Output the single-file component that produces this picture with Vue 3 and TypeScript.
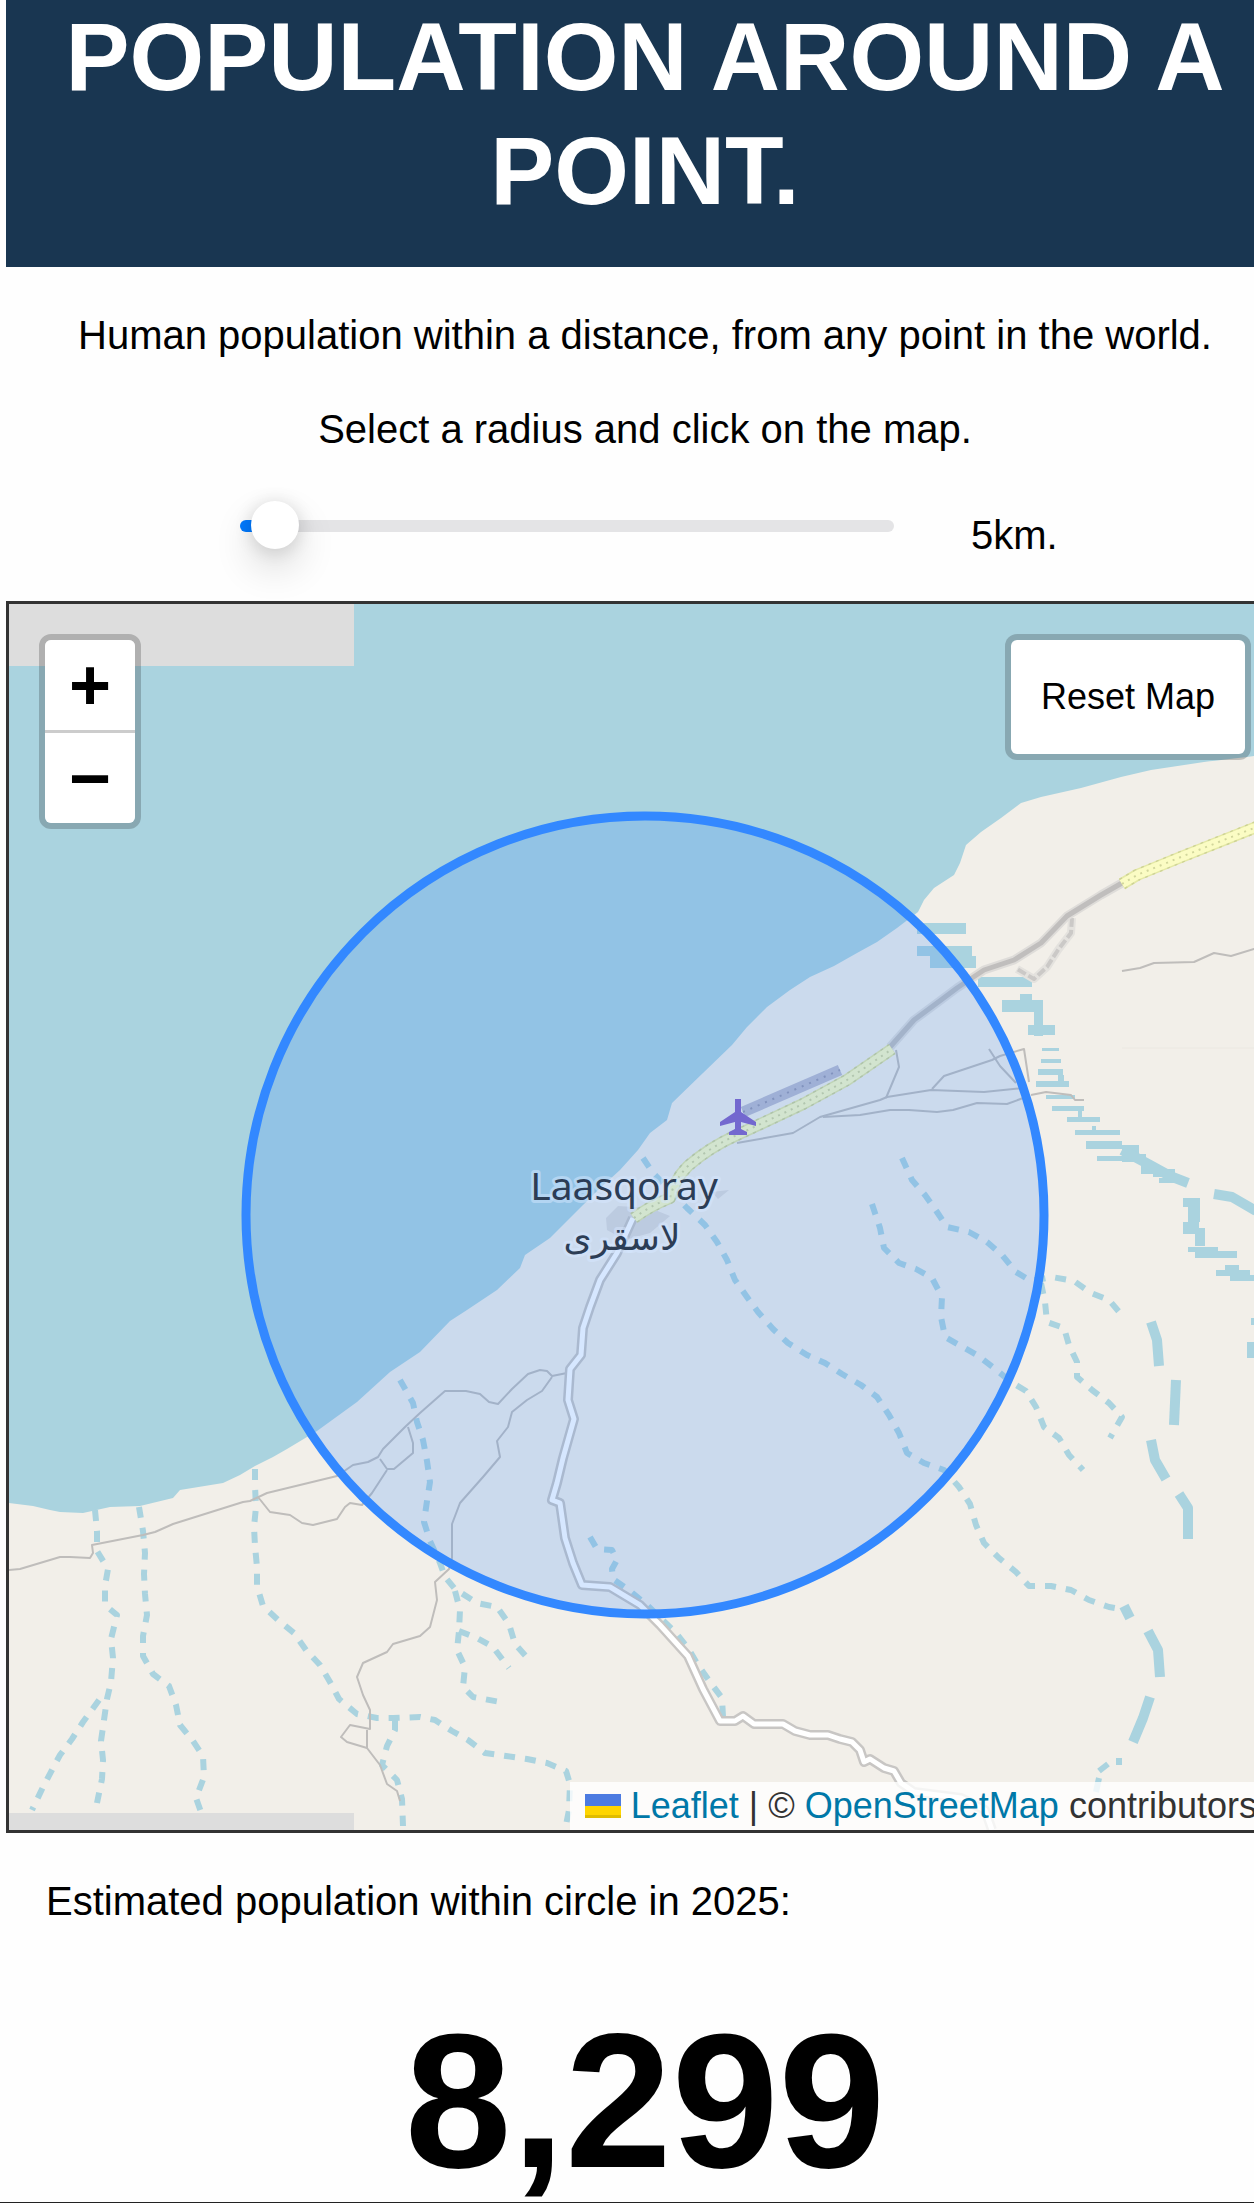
<script setup lang="ts">
import { computed, ref } from 'vue'

const MIN_RADIUS = 1
const MAX_RADIUS = 220

const radius = ref(5)
const population = ref(8299)

const fill = computed(() => `${((radius.value - MIN_RADIUS) / (MAX_RADIUS - MIN_RADIUS)) * 100}%`)
const populationText = computed(() => population.value.toLocaleString('en-US'))

function resetMap() {
  radius.value = 5
}

// Dry river beds, drawn dashed
const streams: string[] = [
  '902,1158 912,1180 925,1195 937,1212 947,1227 969,1232 987,1242 1002,1255 1016,1272 1031,1281 1052,1277 1074,1281 1091,1293 1109,1300 1120,1313',
  '872,1204 880,1228 884,1248 899,1263 916,1269 932,1278 942,1297 941,1317 945,1337 961,1346 977,1355 994,1368 1011,1382 1026,1391 1036,1407 1044,1427 1059,1438 1069,1455 1083,1470',
  '1041,1283 1045,1302 1047,1322 1064,1328 1069,1345 1077,1362 1077,1377 1092,1390 1109,1403 1122,1417 1110,1438',
  '643,1158 653,1173 687,1208 705,1225 717,1242 727,1260 735,1280 747,1297 758,1312 773,1329 788,1343 807,1355 825,1363 842,1374 861,1385 877,1397 889,1415 899,1433 907,1453 924,1463 944,1470 959,1487 970,1504 976,1525 984,1543 999,1558 1016,1572 1029,1586 1051,1586 1071,1590 1089,1600 1109,1607 1120,1609',
  '95,1510 97,1531 97,1551 108,1569 105,1586 105,1605 117,1615 111,1639 113,1658 111,1682 107,1699 104,1720 101,1741 103,1760 102,1779 97,1803',
  '99,1700 83,1722 72,1739 60,1755 53,1768 43,1787 32,1810',
  '139,1507 143,1531 145,1553 144,1574 145,1594 147,1615 143,1636 143,1656 153,1674 169,1686 176,1705 180,1725 193,1741 203,1756 204,1777 196,1798 201,1812',
  '255,1469 255,1486 256,1507 254,1527 255,1546 257,1567 257,1586 263,1606 278,1620 294,1633 306,1650 320,1665 330,1682 339,1699 357,1714 377,1718 393,1718 420,1717 435,1720 452,1731 468,1740 485,1753 506,1756 527,1759 547,1763 566,1771 570,1784 569,1810 565,1830',
  '395,1720 395,1730 387,1746 382,1765 397,1780 402,1799 403,1826',
  '400,1380 413,1403 417,1422 423,1440 427,1461 430,1482 427,1501 424,1522 430,1541 440,1563 445,1577 455,1589 477,1603 497,1607 509,1624 515,1644 531,1662',
  '455,1591 460,1610 459,1631 457,1650 465,1667 463,1687 473,1697 500,1702',
  '459,1631 477,1638 493,1647 509,1668',
  '590,1537 597,1549 612,1550 617,1560 612,1569 613,1579 630,1591 647,1605 675,1632 688,1648 698,1665 710,1682 722,1698 723,1717',
]

// Wider river beds on the coarse eastern tiles
const wadis: string[] = [
  '1151,1322 1157,1340 1159,1366',
  '1176,1380 1174,1425',
  '1151,1440 1155,1460 1166,1479',
  '1179,1494 1188,1508 1188,1539',
  '1124,1606 1130,1618',
  '1148,1631 1158,1650 1160,1677',
  '1150,1697 1143,1718 1133,1742',
  '1122,1150 1150,1165 1170,1176 1188,1183',
  '1214,1194 1232,1197 1256,1211',
]

const thinWadis: string[] = ['1119,1758 1119,1765', '1108,1764 1099,1771', '1099,1778 1096,1792']

// Braided channel crossing the eastern road: x, y, width, height
const channel: number[][] = [
  [917, 923, 49, 11], [917, 946, 55, 10], [930, 956, 46, 12], [978, 977, 54, 10], [1020, 994, 12, 10],
  [1002, 1000, 41, 12], [1034, 1006, 9, 30], [1028, 1025, 27, 10], [1042, 1048, 17, 3],
  [1041, 1059, 20, 4], [1038, 1069, 25, 6], [1058, 1075, 6, 6], [1036, 1081, 33, 6], [1046, 1095, 29, 4],
  [1052, 1106, 32, 5], [1078, 1111, 4, 6], [1067, 1117, 33, 5], [1092, 1126, 4, 4], [1075, 1130, 45, 5],
  [1086, 1141, 36, 8], [1097, 1156, 42, 5], [1122, 1145, 17, 17], [1134, 1154, 12, 7], [1141, 1162, 12, 12],
  [1153, 1169, 22, 8], [1159, 1178, 23, 5],
  [1183, 1198, 17, 9], [1188, 1207, 12, 15], [1183, 1222, 16, 12], [1195, 1228, 10, 18],
  [1188, 1247, 30, 5], [1195, 1251, 42, 7], [1225, 1265, 14, 6], [1216, 1270, 34, 6], [1230, 1275, 26, 6],
  [1247, 1342, 8, 16], [1251, 1318, 4, 7],
]

const tracks: string[] = [
  '8,1570 20,1569 60,1557 70,1557 90,1558 93,1553 92,1545 143,1535 155,1532 173,1524 243,1502 250,1501 267,1493 337,1476 353,1465 368,1462 378,1457 383,1449 405,1427 420,1413 445,1391 466,1391 480,1394 489,1402 498,1404 512,1389 528,1374 540,1370 547,1371 552,1376 567,1373',
  '380,1459 387,1469 394,1469 413,1453 413,1443 408,1427',
  '387,1470 372,1493 362,1505 350,1503 345,1507 337,1519 313,1525 302,1523 290,1515 270,1512 258,1497',
  '552,1377 542,1391 527,1400 512,1412 508,1427 497,1441 500,1457 483,1477 460,1503 452,1524 452,1558 449,1569 435,1582 437,1600 430,1627 420,1636 393,1644 387,1652 363,1663 357,1677 363,1695 370,1710 370,1729 350,1725 341,1737 347,1742 367,1748 367,1730',
  '367,1748 380,1765 387,1784 397,1791 400,1801',
  '737,1143 793,1133 820,1117 880,1100 887,1097 931,1090 984,1092 1024,1088',
  '823,1117 860,1115 890,1110 909,1110 937,1112 953,1110 977,1103 1007,1104 1026,1097',
  '886,1098 899,1067 896,1050',
  '932,1089 944,1076 992,1060 1000,1056 1024,1049 1029,1082',
  '989,1049 1000,1066 1016,1083',
  '1031,1095 1046,1092 1071,1095 1075,1100 1084,1100',
  '1122,971 1140,968 1154,963 1194,962 1214,953 1231,956 1254,949 1281,942',
]

const mainRoad =
  '633,1218 617,1253 600,1280 590,1307 583,1328 581,1355 570,1369 568,1400 574,1419 563,1458 557,1483 552,1500 560,1503 565,1538 573,1563 582,1585 610,1587 640,1605 660,1625 688,1656 703,1689 720,1721 735,1721 743,1716 754,1724 783,1724 795,1731 810,1735 828,1735 840,1739 852,1742 860,1750 864,1762 870,1759 884,1768 894,1771 901,1783 914,1792 961,1798 985,1810 992,1830'

const coast =
  'M9 604H1281V752C1250 757 1225 759 1204 762L1151 770L1121 777L1081 788L1041 797L1021 803L1001 818L981 832L966 845L960 863L954 875L934 888L924 900L918 912L897 928L877 942L857 953L834 966L810 977L790 990L767 1007L747 1027L732 1045L703 1073L672 1103L667 1120L650 1133L638 1150L620 1170L598 1190L583 1205L550 1238L525 1255L520 1268L497 1290L467 1310L450 1321L420 1352L390 1372L357 1402L317 1431L287 1449L273 1457L255 1466L240 1475L223 1483L180 1490L173 1498L140 1506L110 1507L83 1513L60 1512L50 1510L33 1506L9 1503Z'

const trunkRoads: string[] = [
  'M634 1218Q650 1206 670 1198Q674 1180 688 1166Q710 1147 737 1135L803 1104L847 1080L892 1049',
  'M1122 884L1137 875L1181 857L1254 828L1281 817',
]

const unpaved = 'M890 1047L914 1020L941 1000L957 988L984 970L1014 960L1041 943L1067 916L1101 895L1122 883'
const unpavedLoop = 'M1072 918L1071 933L1058 950L1047 967L1034 979L1017 969'
</script>

<template>
  <div class="page">
    <div class="sheet">
      <header class="banner">
        <h1>POPULATION AROUND A POINT.</h1>
      </header>

      <section class="intro">
        <p>Human population within a distance, from any point in the world.</p>
        <p><label for="radius">Select a radius and click on the map.</label></p>
      </section>

      <div class="radius-row">
        <input
          id="radius"
          v-model.number="radius"
          class="slider"
          type="range"
          :min="MIN_RADIUS"
          :max="MAX_RADIUS"
          :style="{ '--fill': fill }"
        />
        <output class="radius-value" for="radius">{{ radius }}km.</output>
      </div>

      <main class="map">
        <svg class="tiles" viewBox="9 604 1272 1226" role="img" aria-label="Map of Laasqoray">
          <rect x="9" y="604" width="1272" height="1226" fill="#f2efe9" />
          <path :d="coast" fill="#aad3df" />
          <path d="M606 1218L618 1206L650 1208L670 1216L650 1233L625 1240L607 1230ZM712 1192L729 1190L718 1199Z" fill="#dfdcd9" />

          <g shape-rendering="crispEdges" fill="#aad3df">
            <rect v-for="(c, i) in channel" :key="i" :x="c[0]" :y="c[1]" :width="c[2]" :height="c[3]" />
          </g>
          <g class="line" stroke="#aad3df">
            <polyline v-for="(s, i) in streams" :key="i" :points="s" stroke-width="6" stroke-dasharray="11 10" />
            <polyline v-for="(w, i) in wadis" :key="`w${i}`" :points="w" stroke-width="10" />
            <polyline v-for="(w, i) in thinWadis" :key="`t${i}`" :points="w" stroke-width="6" />
          </g>

          <g class="line" stroke="#bfbdbb" stroke-width="2">
            <polyline v-for="(t, i) in tracks" :key="i" :points="t" />
          </g>
          <path class="line" d="M1122 1048H1281" stroke="#ebe8e2" stroke-width="1" />

          <polyline class="line" :points="mainRoad" stroke="#c8c6c4" stroke-width="10" />
          <polyline class="line" :points="mainRoad" stroke="#fff" stroke-width="5" />

          <g class="line">
            <path :d="unpavedLoop" stroke="#e4e2de" stroke-width="8" />
            <path :d="unpavedLoop" stroke="#cbc9c7" stroke-width="4" stroke-dasharray="9 3" />
            <path :d="unpaved" stroke="#dedcd9" stroke-width="9" />
            <path :d="unpaved" stroke="#c0bebd" stroke-width="5" />
            <path d="M743 1112L840 1070" stroke="#bbbbcc" stroke-width="11" />
            <path d="M743 1112L840 1070" stroke="#9596ae" stroke-width="2" stroke-dasharray="2 6" />
            <g v-for="d in trunkRoads" :key="d">
              <path :d="d" stroke="#e4e8a6" stroke-width="12" />
              <path :d="d" stroke="#cdd295" stroke-width="12" stroke-dasharray="3 5" />
              <path :d="d" stroke="#fbfcc4" stroke-width="9" />
              <path :d="d" stroke="#d2d69c" stroke-width="2" stroke-dasharray="2 5" />
            </g>
          </g>

          <path
            d="M735 1099H741V1112L756 1122V1126L741 1122V1129L747 1132V1135H729V1132L735 1129V1122L720 1126V1122L735 1112Z"
            fill="#8461c4"
          />

          <g class="place" text-anchor="middle">
            <text x="624" y="1200" font-size="39">Laasqoray</text>
            <text x="622" y="1250" font-size="36">لاسقری</text>
          </g>

          <g shape-rendering="crispEdges" fill="#ddd">
            <rect x="9" y="604" width="345" height="62" />
            <rect x="9" y="1813" width="345" height="17" />
          </g>

          <circle cx="645" cy="1215" r="399" fill="#38f" fill-opacity="0.2" stroke="#38f" stroke-width="9" />
        </svg>

        <div class="zoom-control">
          <button type="button" aria-label="Zoom in">+</button>
          <button type="button" aria-label="Zoom out">−</button>
        </div>

        <button type="button" class="reset" @click="resetMap">Reset Map</button>

        <div class="attribution">
          <a href="#leaflet"><svg class="flag" viewBox="0 0 12 8" aria-hidden="true">
            <path fill="#4c7be1" d="M0 0h12v4H0z" />
            <path fill="#ffd500" d="M0 4h12v3H0z" />
            <path fill="#e0bc00" d="M0 7h12v1H0z" />
          </svg> Leaflet</a> | © <a href="#openstreetmap">OpenStreetMap</a> contributors
        </div>
      </main>

      <section class="result">
        <p>Estimated population within circle in 2025:</p>
        <strong>{{ populationText }}</strong>
      </section>
    </div>
  </div>
</template>

<style>
body {
  margin: 0;
  background: #fefefe;
}
</style>

<style scoped>
.page {
  overflow: hidden;
  border-bottom: 1px solid #222;
  color: #000;
  font-family: "Liberation Sans", Arial, sans-serif;
  font-size: 40px;
  line-height: 46px;
}

/* The sheet is slightly wider than the window and runs off its right edge */
.sheet {
  width: calc(100% + 24px);
  margin-left: 6px;
}

.banner {
  padding-bottom: 39px;
  background: #193651;
  color: #fff;
  text-align: center;
}

h1 {
  margin: 0;
  padding: 0 40px;
  font-size: 96px;
  line-height: 114px;
}

.intro {
  display: flex;
  flex-direction: column;
  gap: 48px;
  padding: 45px 0 49px;
  text-align: center;
}

p {
  margin: 0;
}

.radius-row {
  display: flex;
  gap: 77px;
  height: 57px;
  margin-bottom: 43px;
  padding-left: 234px;
}

.radius-value {
  align-self: flex-end;
}

.slider {
  width: 654px;
  height: 50px;
  margin: 0;
  background: none;
  appearance: none;
}

.slider::-webkit-slider-runnable-track {
  height: 12px;
  border-radius: 6px;
  background: linear-gradient(to right, #007aff var(--fill), transparent var(--fill)) 12px 0 no-repeat,
    linear-gradient(to right, #007aff 24px, #e4e4e6 24px);
}

.slider::-webkit-slider-thumb {
  width: 48px;
  height: 48px;
  margin-top: -19px;
  border-radius: 50%;
  background: #fff;
  box-shadow: 0 18px 39px rgba(0, 0, 0, 0.16), 0 2px 18px rgba(0, 0, 0, 0.14);
  appearance: none;
}

.map {
  position: relative;
  border: 3px solid #333;
  background: #ddd;
}

.tiles {
  display: block;
  width: 100%;
  height: auto;
}

.line {
  fill: none;
  stroke-linejoin: round;
}

.place {
  fill: #2b2b2b;
  stroke: rgba(255, 255, 255, 0.5);
  stroke-width: 6px;
  stroke-linejoin: round;
  paint-order: stroke;
  font-family: "Noto Sans", "DejaVu Sans", sans-serif;
}

button {
  padding: 0;
  border: 0;
  background: #fff;
  color: #000;
  font-family: inherit;
}

.zoom-control,
.reset {
  position: absolute;
  top: 30px;
  border: 6px solid rgba(0, 0, 0, 0.2);
  border-radius: 12px;
  background-clip: padding-box;
}

.zoom-control {
  left: 30px;
  display: flex;
  flex-direction: column;
}

.zoom-control button {
  box-sizing: content-box;
  width: 90px;
  height: 90px;
  border-radius: 0 0 6px 6px;
  font-size: 72px;
  font-weight: bold;
  line-height: 90px;
}

.zoom-control button:first-child {
  border-bottom: 3px solid #ccc;
  border-radius: 6px 6px 0 0;
}

.reset {
  right: 30px;
  padding: 0 30px;
  font-size: 36px;
  line-height: 114px;
}

.attribution {
  position: absolute;
  right: 0;
  bottom: 0;
  padding: 0 24px 0 15px;
  background: rgba(255, 255, 255, 0.8);
  color: #333;
  font-size: 36px;
  line-height: 48px;
  white-space: nowrap;
}

.attribution a {
  color: #0078a8;
  text-decoration: none;
}

.flag {
  width: 36px;
  height: 24px;
}

.result {
  padding-top: 45px;
}

.result p {
  padding-left: 40px;
}

.result strong {
  display: block;
  margin-top: 76px;
  font-size: 192px;
  line-height: 202px;
  text-align: center;
}
</style>
